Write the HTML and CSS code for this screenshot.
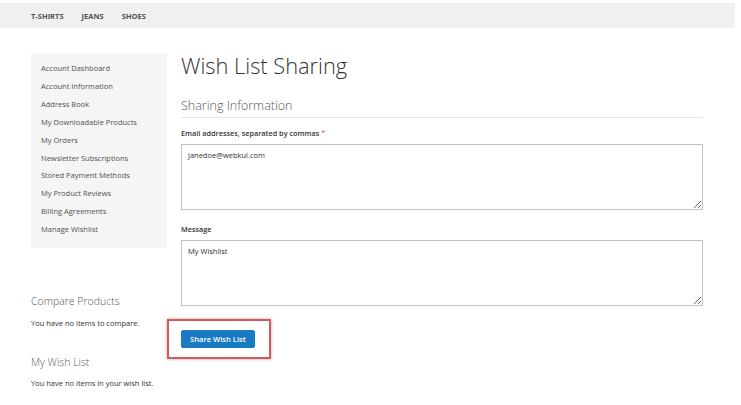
FILE: index.html
```html
<!DOCTYPE html>
<html>
<head>
	<meta charset="utf-8">
	<title>Wish List Sharing</title>
	<link rel="stylesheet" href="styles.css">
</head>
<body>
	<div class="nav">
		<a href="#">T-Shirts</a>
		<a href="#">Jeans</a>
		<a href="#">Shoes</a>
	</div>

	<div class="page">
		<div class="side">
			<ul class="side__menu">
				<li><a href="#">Account Dashboard</a></li>
				<li><a href="#">Account Information</a></li>
				<li><a href="#">Address Book</a></li>
				<li><a href="#">My Downloadable Products</a></li>
				<li><a href="#">My Orders</a></li>
				<li><a href="#">Newsletter Subscriptions</a></li>
				<li><a href="#">Stored Payment Methods</a></li>
				<li><a href="#">My Product Reviews</a></li>
				<li><a href="#">Billing Agreements</a></li>
				<li><a href="#">Manage Wishlist</a></li>
			</ul>

			<div class="block block--compare">
				<h3>Compare Products</h3>
				<p>You have no items to compare.</p>
			</div>

			<div class="block">
				<h3>My Wish List</h3>
				<p>You have no items in your wish list.</p>
			</div>
		</div>

		<div class="main">
			<h1>Wish List Sharing</h1>
			<h2>Sharing Information</h2>

			<div class="field">
				<label for="emails">Email addresses, separated by commas <span class="req">*</span></label>
				<textarea id="emails">janedoe@webkul.com</textarea>
			</div>

			<div class="field">
				<label for="message">Message</label>
				<textarea id="message">My Wishlist</textarea>
			</div>

			<div class="actions">
				<button>Share Wish List</button>
				<span class="highlight"></span>
			</div>
		</div>
	</div>
</body>
</html>
```

FILE: styles.css
```css
body {
	font-family: "Open Sans", "Helvetica Neue", Helvetica, Arial, sans-serif;
	color: #333;
	background-color: #fff;
	margin: 0;
	padding-top: 3px;
}

a {
	color: inherit;
	text-decoration: none;
}

.nav {
	display: flex;
	gap: 18px;
	height: 25px;
	align-items: center;
	padding-left: 31px;
	margin-right: 6px;
	background-color: #f0f0f0;
	font-size: 7.5px;
	font-weight: 700;
	text-transform: uppercase;
	color: #505050;
}

.page {
	display: flex;
	gap: 14px;
	padding: 25px 38px 0 31px;
}

.side {
	flex: 0 0 136px;
}

.side__menu {
	list-style: none;
	margin: 0;
	padding: 7px 0 9px;
	background-color: #f5f5f5;
	font-size: 7.5px;
	color: #505050;
}

.side__menu li {
	padding: 0 10px;
	line-height: 17.9px;
}

.block h3 {
	font-size: 10.5px;
	font-weight: 300;
	color: #575757;
	margin: 0 0 10px;
	line-height: 1.2;
}

.block p {
	font-size: 7.5px;
	margin: 0;
	color: #333;
}

.block--compare {
	margin: 47px 0 28px;
}

.main {
	flex: 1;
}

.main h1 {
	font-size: 21.8px;
	font-weight: 300;
	color: #333;
	margin: 0 0 18px;
	line-height: 26px;
}

.main h2 {
	font-size: 12.5px;
	font-weight: 300;
	color: #575757;
	margin: 0 0 10px;
	padding-bottom: 3px;
	border-bottom: 1px solid #e4e4e4;
	line-height: 17px;
}

.field {
	margin-bottom: 14px;
}

.field label {
	display: block;
	font-size: 7.3px;
	font-weight: 600;
	margin-bottom: 6px;
	line-height: 10px;
}

.req {
	color: #c06060;
	font-weight: 400;
}

textarea {
	display: block;
	box-sizing: border-box;
	width: 100%;
	height: 66px;
	border: 1px solid #c2c2c2;
	padding: 5px 6px;
	font-family: inherit;
	font-size: 7.5px;
	color: #333;
	resize: vertical;
}

.actions {
	position: relative;
	padding-top: 10px;
}

button {
	display: block;
	background-color: #1979c3;
	border: 1px solid #1979c3;
	color: #fff;
	font-family: inherit;
	font-size: 7.6px;
	font-weight: 600;
	padding: 0 8px;
	height: 18px;
	border-radius: 2px;
	cursor: pointer;
}

.highlight {
	position: absolute;
	left: -14px;
	top: -1px;
	width: 100px;
	height: 36px;
	border: 2px solid #cf5a5f;
	box-shadow: 0 0 3px rgba(160, 40, 40, .45);
	pointer-events: none;
}
```
